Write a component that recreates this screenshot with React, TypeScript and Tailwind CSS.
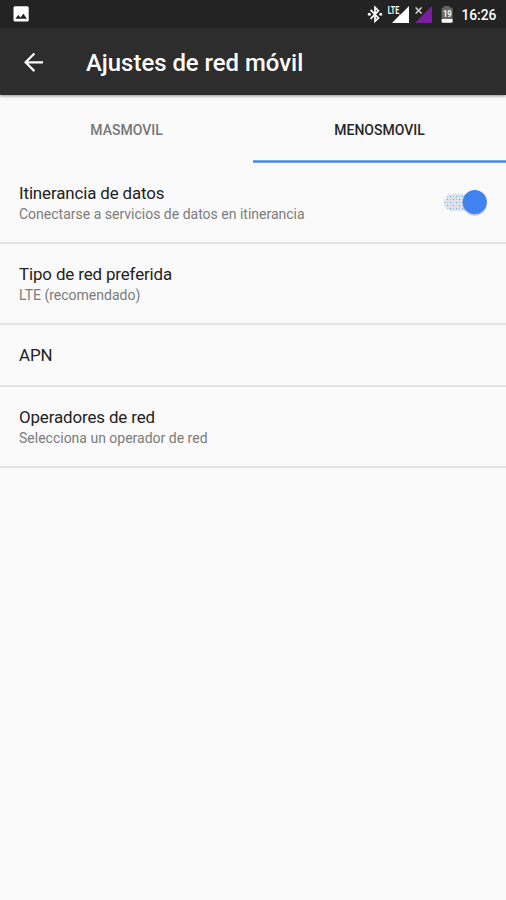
type RowProps = { title: string; summary?: string; on?: boolean };

function Switch() {
  return (
    <svg width="50" height="32" viewBox="0 0 50 32" className="mb-0.5 shrink-0" role="switch" aria-checked="true">
      <defs>
        <pattern id="dots" width="6" height="6" patternUnits="userSpaceOnUse">
          <rect width="6" height="6" fill="#dfe2e6" />
          <rect x="1" y="1" width="1" height="1" fill="#65a2f5" />
          <rect x="4" y="4" width="1" height="1" fill="#65a2f5" />
          <rect x="4" y="1" width="1" height="1" fill="#9fc2f0" />
          <rect x="1" y="4" width="1" height="1" fill="#9fc2f0" />
        </pattern>
      </defs>
      <rect x="4" y="8" width="40" height="17" rx="8.5" fill="url(#dots)" />
      <circle cx="34.8" cy="17.6" r="12.3" fill="#000" opacity="0.12" />
      <circle cx="34.8" cy="17" r="12.2" fill="#000" opacity="0.1" />
      <circle cx="34.8" cy="16.1" r="12" fill="#3f82f0" />
    </svg>
  );
}

function Row({ title, summary, on }: RowProps) {
  return (
    <div
      className={`flex items-center justify-between border-b-2 border-[#e3e3e3] pl-[19px] pr-4 ${
        summary ? "h-[81px]" : "h-[62px]"
      }`}
    >
      <div className="pt-px">
        <div className="text-[16.9px] leading-[21px] tracking-[-0.12px] text-[#222]">{title}</div>
        {summary && <div className="text-[14px] leading-5 text-[#7b7b7b]">{summary}</div>}
      </div>
      {on && <Switch />}
    </div>
  );
}

export default function App() {
  return (
    <div className="flex h-[900px] w-[506px] flex-col overflow-hidden bg-[#fafafa] font-['Roboto',sans-serif]">
      <div className="flex h-7 shrink-0 items-center justify-between bg-[#232323] pl-[13px] pr-[9px]">
        <svg width="16" height="16" viewBox="0 0 16 16">
          <rect x="0.5" y="0.3" width="15.2" height="15.2" rx="1.5" fill="#fff" />
          <path d="M2.3 12.7 5.3 9l2.1 2.5L10.4 7.7l3.6 5Z" fill="#232323" />
        </svg>
        <svg width="137" height="28" viewBox="360 0 137 28" fontFamily="Roboto, sans-serif" fill="#fff">
          <path
            d="M370.6 9.8 378.4 17.9 375 21.3V7.3L378.4 10.7 370.6 18.8"
            fill="none"
            stroke="#fff"
            strokeWidth="1.7"
          />
          <circle cx="369.3" cy="14.3" r="1.5" />
          <circle cx="380.7" cy="14.3" r="1.5" />
          <text
            x="387.8"
            y="13.6"
            fontSize="10.3"
            fontWeight="700"
            textLength="11.4"
            lengthAdjust="spacingAndGlyphs"
          >
            LTE
          </text>
          <path d="M409 6v17h-17l7.4-7.4v-1.2h1.2Z" />
          <path d="M432 6v17h-17Z" fill="#7b1fa2" />
          <path d="m415.6 7.4 6 6m0-6-6 6" stroke="#ddd" strokeWidth="1.4" />
          <path d="M444 6h1.2V6h4.2v1.6h2q1.2 0 1.2 1.2V19h-11V8.8q0-1.2 1.2-1.2h1.2Z" fill="#666" />
          <path d="M441.6 19h11v2.6q0 1.2-1.2 1.2h-8.6q-1.2 0-1.2-1.2Z" />
          <text x="442.9" y="17.2" fontSize="9.2" fontWeight="700" textLength="8.8" lengthAdjust="spacingAndGlyphs">
            19
          </text>
          <text x="461.4" y="19.6" fontSize="14.4" fontWeight="500" textLength="35" lengthAdjust="spacingAndGlyphs">
            16:26
          </text>
        </svg>
      </div>
      <header className="z-10 flex h-[67px] shrink-0 items-center bg-[#2d2d2d] pl-6 shadow-[0_1px_3px_rgba(0,0,0,0.45)]">
        <svg width="20" height="20" viewBox="0 0 20 20" fill="none" stroke="#fff" strokeWidth="2.2">
          <path d="M19 10.3H2M10.4 1.4 1.6 10.3l8.8 8.8" />
        </svg>
        <h1 className="ml-[42px] mt-[3px] text-[23.9px] font-medium leading-8 text-white">Ajustes de red móvil</h1>
      </header>
      <nav className="grid h-[68px] shrink-0 grid-cols-2 text-center text-[14px] font-medium">
        <div className="pt-[25px] leading-5 text-[#767676]">MASMOVIL</div>
        <div className="flex flex-col justify-between pt-[25px] leading-5 text-[#262626]">
          MENOSMOVIL
          <div className="h-[3px] border-y border-[#75a9f7] bg-[#3f7de8]" />
        </div>
      </nav>
      <main>
        <Row title="Itinerancia de datos" summary="Conectarse a servicios de datos en itinerancia" on />
        <Row title="Tipo de red preferida" summary="LTE (recomendado)" />
        <Row title="APN" />
        <Row title="Operadores de red" summary="Selecciona un operador de red" />
      </main>
    </div>
  );
}
